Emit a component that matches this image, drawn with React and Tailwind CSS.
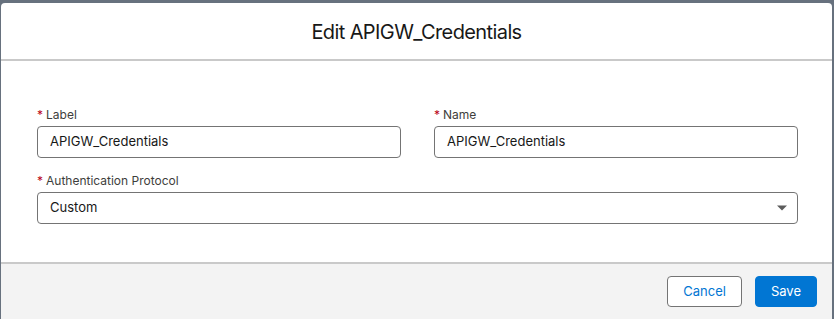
import React from 'react';

const Field = ({ label, value, className = '' }) => (
  <div className={className}>
    <label className="flex items-center h-[18px] text-[12px] text-[#3e3e3c] mb-[2px]">
      <span className="text-[#ba0517] mr-[3px]">*</span>
      {label}
    </label>
    <div className="h-[32px] border border-[#747474] rounded-[4px] flex items-center pl-[12px] text-[13px] text-[#181818]">
      {value}
    </div>
  </div>
);

const App = () => {
  return (
    <div className="w-[834px] h-[319px] bg-[#67717e] pt-[3px] pl-[1px] pr-[2px] overflow-hidden" style={{ fontFamily: 'Inter, "Liberation Sans", sans-serif' }}>
      <div className="bg-white rounded-t-[4px] h-full flex flex-col">
        {/* Header */}
        <div className="h-[58px] flex items-center justify-center border-b-2 border-[#c9c9c9] shrink-0">
          <h2 className="text-[20px] tracking-[-0.6px] text-[#181818] font-normal pt-[1px]">Edit APIGW_Credentials</h2>
        </div>

        {/* Body */}
        <div className="flex-1 pl-[36px] pr-[34px] pt-[45px]">
          <div className="grid grid-cols-2 gap-x-[33px]">
            <Field label="Label" value="APIGW_Credentials" />
            <Field label="Name" value="APIGW_Credentials" />
          </div>
          <div className="mt-[14px]">
            <label className="flex items-center h-[18px] text-[12px] text-[#3e3e3c] mb-[2px]">
              <span className="text-[#ba0517] mr-[3px]">*</span>
              Authentication Protocol
            </label>
            <div className="h-[32px] border border-[#747474] rounded-[4px] flex items-center justify-between pl-[12px] pr-[10px] text-[13px] text-[#181818]">
              <span>Custom</span>
              <svg width="10" height="6" viewBox="0 0 10 6">
                <path d="M0 0.5 L10 0.5 L5 5.5 Z" fill="#5c5c5c" />
              </svg>
            </div>
          </div>
        </div>

        {/* Footer */}
        <div className="h-[57px] shrink-0 border-t-2 border-[#c9c9c9] bg-[#f3f3f3] flex items-center justify-end gap-[13px] pr-[15px]">
          <button className="h-[31px] px-[15px] border border-[#747474] bg-white rounded-[4px] text-[13px] text-[#0176d3]">
            Cancel
          </button>
          <button className="h-[31px] px-[15px] border border-[#0176d3] bg-[#0176d3] rounded-[4px] text-[13px] text-white">
            Save
          </button>
        </div>
      </div>
    </div>
  );
};

export default App;
